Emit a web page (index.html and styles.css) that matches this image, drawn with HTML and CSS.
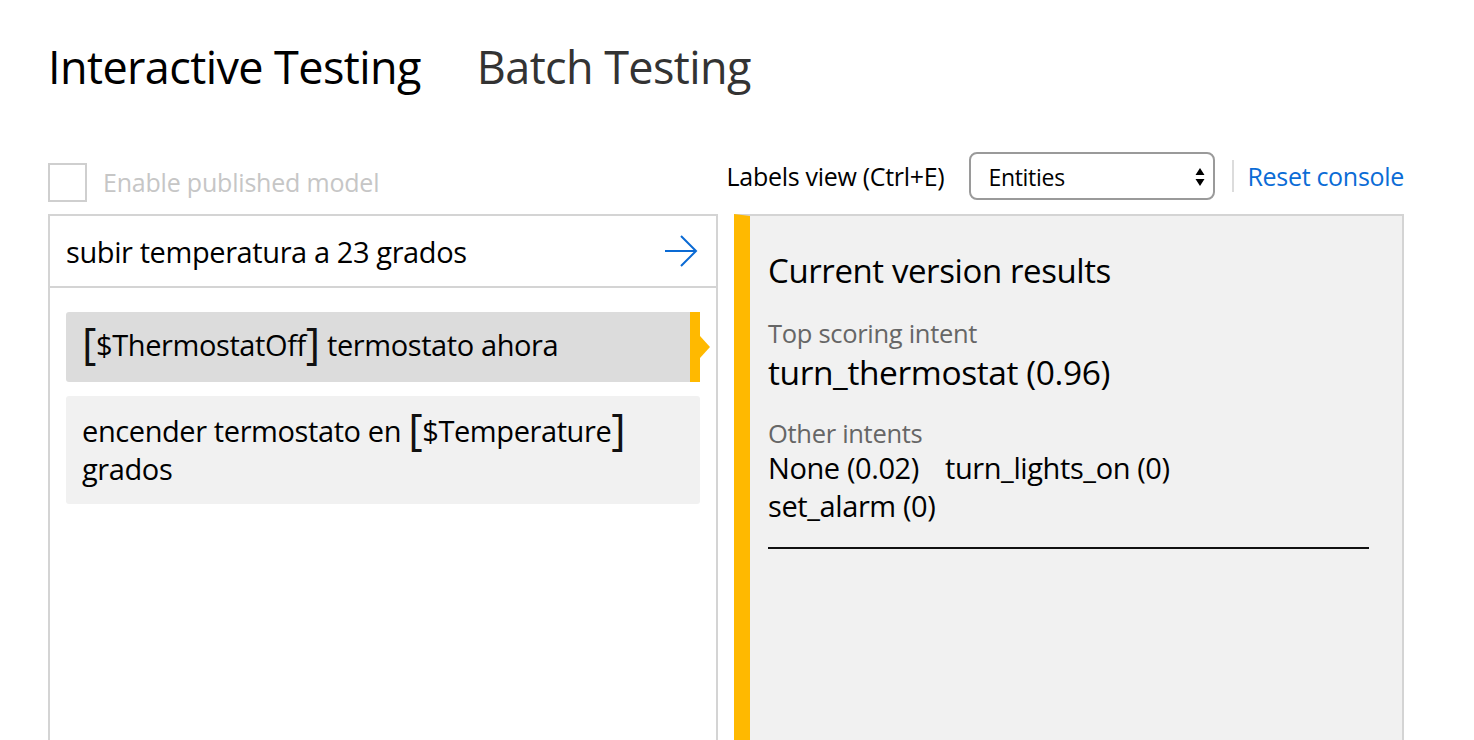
FILE: index.html
```html
<!DOCTYPE html>
<html>
<head>
<meta charset="utf-8">
<link rel="stylesheet" href="styles.css">
</head>
<body>
<div class="page">
  <div class="tabs">
    <span class="tab active">Interactive Testing</span>
    <span class="tab">Batch Testing</span>
  </div>
  <div class="toolbar">
    <label class="check">
      <span class="box"></span>
      <span class="check-label">Enable published model</span>
    </label>
    <div class="tools">
      <span class="labels-view">Labels view (Ctrl+E)</span>
      <div class="select">
        <span>Entities</span>
        <svg class="updown" width="10" height="22" viewBox="0 0 10 22"><path d="M5 2 L9.5 9 L0.5 9 Z M0.5 13 L9.5 13 L5 20 Z" fill="#000"/></svg>
      </div>
      <span class="sep"></span>
      <a class="reset">Reset console</a>
    </div>
  </div>
  <div class="panels">
    <div class="left">
      <div class="input-row">
        <span class="input-text">subir temperatura a 23 grados</span>
        <svg class="go" width="34" height="34" viewBox="0 0 34 34"><path d="M1 17 H32 M17 2 L32 17 L17 32" fill="none" stroke="#0a6ad4" stroke-width="2"/></svg>
      </div>
      <div class="list">
        <div class="item selected">
          <span><span class="br">[</span>$ThermostatOff<span class="br">]</span> termostato ahora</span>
          <span class="marker"></span>
        </div>
        <div class="item">
          <span>encender termostato en <span class="br">[</span>$Temperature<span class="br">]</span> grados</span>
        </div>
      </div>
    </div>
    <div class="right">
      <div class="results">
        <h2 class="results-title">Current version results</h2>
        <div class="muted">Top scoring intent</div>
        <div class="top-intent">turn_thermostat (0.96)</div>
        <div class="muted other">Other intents</div>
        <div class="others"><span>None (0.02)</span><span>turn_lights_on (0)</span><span>set_alarm (0)</span></div>
        <div class="rule"></div>
      </div>
    </div>
  </div>
</div>
</body>
</html>
```
FILE: styles.css
```css
html, body { margin: 0; padding: 0; background: #fff; }
body { font-family: "Open Sans", "Noto Sans", sans-serif; color: #000; overflow: hidden; height: 740px; }
.page { padding: 0 70px 0 48px; width: 1356px; }
.tabs { display: flex; gap: 56px; padding-top: 37px; height: 60px; align-items: baseline; }
.tab { font-size: 45px; color: #333; letter-spacing: -0.6px; line-height: 60px; }
.tab.active { color: #000; }
.toolbar { display: flex; justify-content: space-between; align-items: center; margin-top: 55px; height: 48px; }
.check { display: flex; align-items: center; gap: 16px; margin-top: 12px; }
.box { width: 35px; height: 35px; border: 2px solid #cfcfcf; display: block; }
.check-label { font-size: 25px; color: #c6c6c6; letter-spacing: -0.2px; }
.tools { display: flex; align-items: center; }
.labels-view { font-size: 25px; letter-spacing: -0.3px; margin-right: 25px; }
.select { width: 217px; height: 42px; border: 2px solid #9a9a9a; border-radius: 8px; display: flex; align-items: center; justify-content: space-between; padding: 2px 8px 0 17px; font-size: 23px; letter-spacing: -0.3px; box-sizing: content-box; }
.updown { margin-top: -1px; }
.sep { width: 2px; height: 32px; background: #dcdcdc; margin: 0 13px 0 17px; }
.reset { font-size: 25px; color: #0b6cd6; letter-spacing: -0.3px; }
.panels { display: flex; gap: 16px; margin-top: 14px; height: 526px; }
.left { width: 666px; border: 2px solid #d4d4d4; border-bottom: 0; flex: none; }
.input-row { display: flex; justify-content: space-between; align-items: center; height: 70px; border-bottom: 2px solid #d4d4d4; padding: 0 18px 0 16px; }
.input-text { font-size: 29px; letter-spacing: -0.4px; }
.list { padding: 24px 16px 0 16px; display: flex; flex-direction: column; gap: 14px; }
.item { position: relative; background: #f1f1f1; border-radius: 3px; padding: 16px 60px 16px 16px; font-size: 29px; letter-spacing: -0.4px; line-height: 38px; }
.item.selected { background: #dcdcdc; height: 42px; padding-top: 14px; padding-bottom: 14px; border-radius: 3px 0 0 3px; }
.br { font-size: 44px; font-weight: 400; line-height: 30px; vertical-align: -3px; color: #111; }
.marker { position: absolute; right: 0; top: 0; bottom: 0; width: 10px; background: #ffb900; }
.marker::after { content: ""; position: absolute; left: 10px; top: 50%; margin-top: -11px; border-left: 10px solid #ffb900; border-top: 11px solid transparent; border-bottom: 11px solid transparent; }
.right { flex: 1; border-left: 16px solid #ffb900; background: #f1f1f1; border-top: 2px solid #d4d4d4; border-right: 2px solid #d4d4d4; }
.results { padding: 33px 33px 0 18px; }
.results-title { font-size: 33px; font-weight: 400; margin: 0 0 25px; letter-spacing: -0.4px; line-height: 44px; }
.muted { font-size: 25.5px; color: #666; letter-spacing: -0.3px; line-height: 30px; }
.top-intent { font-size: 33.5px; letter-spacing: -0.4px; line-height: 40px; margin-top: 4px; }
.muted.other { margin-top: 26px; }
.others { display: flex; flex-wrap: wrap; width: 440px; column-gap: 26px; font-size: 29px; letter-spacing: -0.4px; line-height: 38px; margin-top: 1px; }
.rule { height: 2px; background: #111; margin-top: 22px; }
```
